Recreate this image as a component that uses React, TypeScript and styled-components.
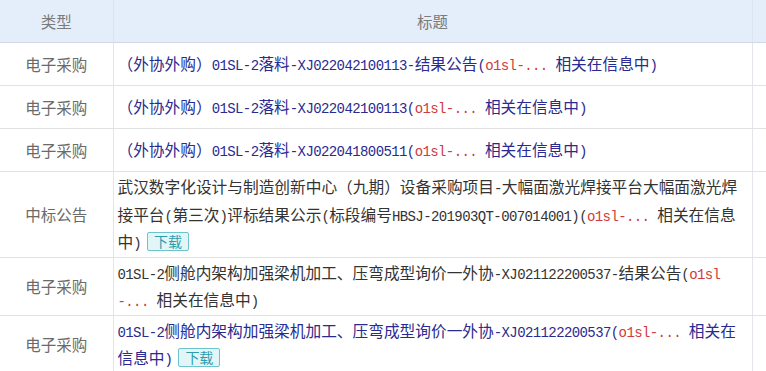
import React from "react";
import styled, { createGlobalStyle } from "styled-components";

const GlobalStyle = createGlobalStyle`
  html, body {
    margin: 0;
    padding: 0;
    background: #fff;
    overflow: hidden;
  }
  body {
    font-family: "Noto Sans CJK SC", "Noto Sans", sans-serif;
  }
`;

const Page = styled.div`
  width: 766px;
  height: 371px;
  overflow: hidden;
`;

const Table = styled.table`
  width: 790px;
  border-collapse: collapse;
  table-layout: fixed;
`;

const HeadCell = styled.th`
  height: 42px;
  padding: 0;
  background: #e3eefa;
  color: #7b7b7b;
  font-weight: normal;
  font-size: 15.5px;
  text-align: center;
  border-bottom: 1px solid #cfdae6;
  border-right: 1px solid #dbe5ef;
`;

const TypeCell = styled.td`
  height: 40px;
  padding: 1px 0;
  color: #6a6a6a;
  font-size: 15.5px;
  text-align: center;
  vertical-align: middle;
  border-bottom: 1px solid #e2e2e2;
  border-right: 1px solid #e2e6ea;
`;

const TitleCell = styled.td<{ $tone: "link" | "plain" }>`
  height: 40px;
  padding: 1px 4px 1px 4px;
  color: ${(p) => (p.$tone === "link" ? "#2a2a90" : "#333333")};
  font-size: 15.7px;
  line-height: 27.5px;
  white-space: nowrap;
  vertical-align: middle;
  border-bottom: 1px solid #e2e2e2;
  border-right: 1px solid #e2e6ea;
`;

const EmptyCell = styled.td`
  border-bottom: 1px solid #e2e2e2;
`;

/* 14px mono squeezed to the 7.8px half-width cell of the CJK text */
const Latin = styled.span`
  font-family: "Liberation Mono", monospace;
  font-size: 14px;
  letter-spacing: -0.6px;
  line-height: 1;
`;

const Red = styled.span`
  color: #d03a3a;
  line-height: 1;
`;

const DownloadButton = styled.span`
  display: inline-block;
  margin-left: 6px;
  padding: 0 6px;
  height: 17px;
  line-height: 17px;
  font-size: 14px;
  color: #2f9cae;
  background: #e2f6f7;
  border: 1px solid #6cc3cb;
  border-radius: 2px;
  vertical-align: 1px;
`;

type Row = {
  type: string;
  title: string;
  tone: "link" | "plain";
  download?: boolean;
};

const rows: Row[] = [
  {
    type: "电子采购",
    title: "（外协外购）01SL-2落料-XJ022042100113-结果公告([o1sl-...] 相关在信息中)",
    tone: "link",
  },
  {
    type: "电子采购",
    title: "（外协外购）01SL-2落料-XJ022042100113([o1sl-...] 相关在信息中)",
    tone: "link",
  },
  {
    type: "电子采购",
    title: "（外协外购）01SL-2落料-XJ022041800511([o1sl-...] 相关在信息中)",
    tone: "link",
  },
  {
    type: "中标公告",
    title:
      "武汉数字化设计与制造创新中心（九期）设备采购项目-大幅面激光焊接平台大幅面激光焊\n接平台(第三次)评标结果公示(标段编号HBSJ-201903QT-007014001)([o1sl-...] 相关在信息\n中)",
    tone: "plain",
    download: true,
  },
  {
    type: "电子采购",
    title:
      "01SL-2侧舱内架构加强梁机加工、压弯成型询价一外协-XJ021122200537-结果公告([o1sl]\n[-...] 相关在信息中)",
    tone: "plain",
  },
  {
    type: "电子采购",
    title: "01SL-2侧舱内架构加强梁机加工、压弯成型询价一外协-XJ021122200537([o1sl-...] 相关在\n信息中)",
    tone: "link",
    download: true,
  },
];

// half-width characters get the narrow mono face, like the page's SimSun
function renderRuns(text: string, keyBase: string) {
  return text
    .split(/([\x20-\x7e]+)/)
    .filter((s) => s.length > 0)
    .map((s, i) =>
      /^[\x20-\x7e]+$/.test(s) ? (
        <Latin key={`${keyBase}-${i}`}>{s}</Latin>
      ) : (
        <React.Fragment key={`${keyBase}-${i}`}>{s}</React.Fragment>
      )
    );
}

function renderLine(line: string, lineIdx: number) {
  return line.split(/(\[[^\]]+\])/).map((part, i) => {
    const key = `${lineIdx}-${i}`;
    if (part.startsWith("[") && part.endsWith("]")) {
      return <Red key={key}>{renderRuns(part.slice(1, -1), key)}</Red>;
    }
    return <React.Fragment key={key}>{renderRuns(part, key)}</React.Fragment>;
  });
}

function Title({ row }: { row: Row }) {
  const lines = row.title.split("\n");
  return (
    <>
      {lines.map((line, i) => (
        <React.Fragment key={i}>
          {i > 0 && <br />}
          {renderLine(line, i)}
        </React.Fragment>
      ))}
      {row.download && <DownloadButton>下载</DownloadButton>}
    </>
  );
}

export default function App() {
  return (
    <Page>
      <GlobalStyle />
      <Table>
        <colgroup>
          <col style={{ width: 113 }} />
          <col style={{ width: 639 }} />
          <col />
        </colgroup>
        <thead>
          <tr>
            <HeadCell>类型</HeadCell>
            <HeadCell>标题</HeadCell>
            <HeadCell />
          </tr>
        </thead>
        <tbody>
          {rows.map((row, i) => (
            <tr key={i}>
              <TypeCell>{row.type}</TypeCell>
              <TitleCell $tone={row.tone}>
                <Title row={row} />
              </TitleCell>
              <EmptyCell />
            </tr>
          ))}
        </tbody>
      </Table>
    </Page>
  );
}
